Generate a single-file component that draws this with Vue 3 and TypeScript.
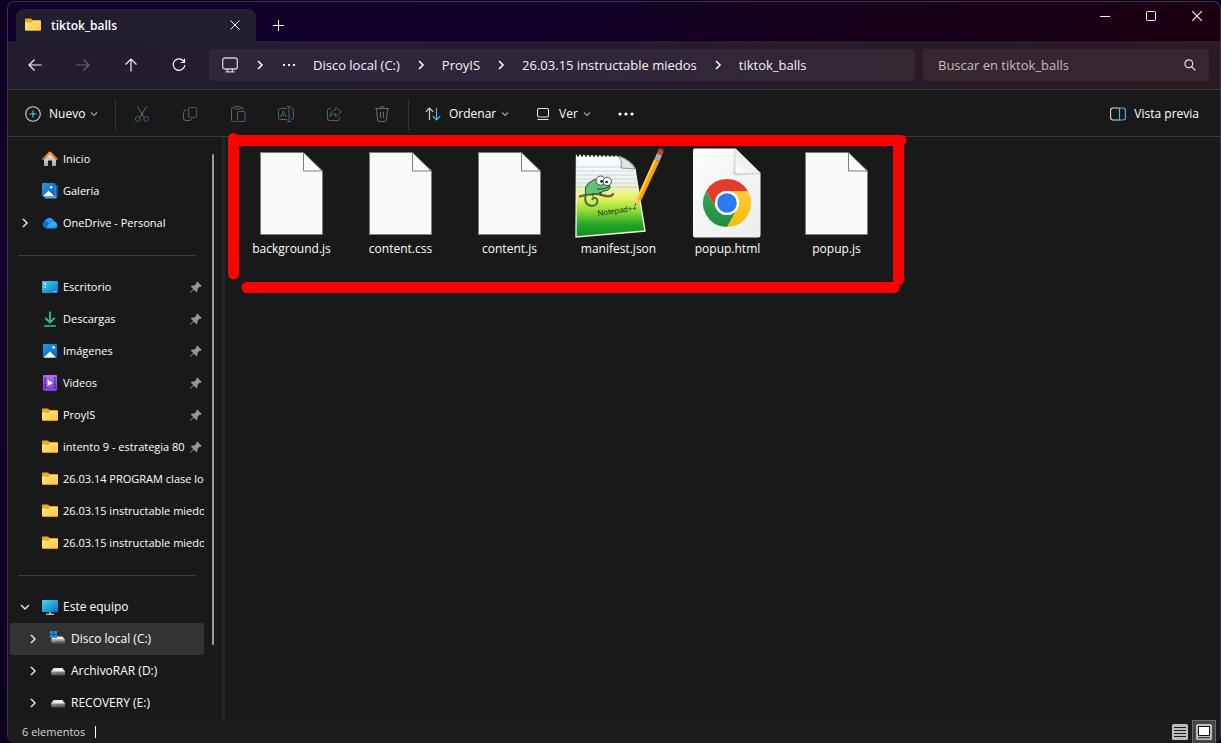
<script setup lang="ts">
import { ref } from 'vue'

interface Place {
  label: string
  icon: string
  arrow?: 'right' | 'down'
  pinned?: boolean
  child?: boolean
  selected?: boolean
}

interface Group {
  id: string
  compact: boolean
  places: Place[]
}

interface FileItem {
  name: string
  icon: string
}

const groups: Group[] = [
  {
    id: 'quick',
    compact: true,
    places: [
      { label: 'Inicio', icon: 'home' },
      { label: 'Galería', icon: 'gallery' },
      { label: 'OneDrive - Personal', icon: 'cloud', arrow: 'right' },
    ],
  },
  {
    id: 'pinned',
    compact: true,
    places: [
      { label: 'Escritorio', icon: 'desktop', pinned: true },
      { label: 'Descargas', icon: 'download', pinned: true },
      { label: 'Imágenes', icon: 'picture', pinned: true },
      { label: 'Videos', icon: 'video', pinned: true },
      { label: 'ProyIS', icon: 'folder', pinned: true },
      { label: 'intento 9 - estrategia 80', icon: 'folder', pinned: true },
      { label: '26.03.14 PROGRAM clase lo', icon: 'folder' },
      { label: '26.03.15 instructable miedo', icon: 'folder' },
      { label: '26.03.15 instructable miedo', icon: 'folder' },
    ],
  },
  {
    id: 'drives',
    compact: false,
    places: [
      { label: 'Este equipo', icon: 'computer', arrow: 'down' },
      { label: 'Disco local (C:)', icon: 'drive-system', arrow: 'right', child: true, selected: true },
      { label: 'ArchivoRAR (D:)', icon: 'drive', arrow: 'right', child: true },
      { label: 'RECOVERY (E:)', icon: 'drive', arrow: 'right', child: true },
    ],
  },
]

const crumbs: string[] = ['Disco local (C:)', 'ProyIS', '26.03.15 instructable miedos', 'tiktok_balls']

const actions = [
  { id: 'cut', label: 'Cortar' },
  { id: 'copy', label: 'Copiar' },
  { id: 'paste', label: 'Pegar' },
  { id: 'rename', label: 'Cambiar nombre' },
  { id: 'share', label: 'Compartir' },
  { id: 'trash', label: 'Eliminar' },
]

const files: FileItem[] = [
  { name: 'background.js', icon: 'page' },
  { name: 'content.css', icon: 'page' },
  { name: 'content.js', icon: 'page' },
  { name: 'manifest.json', icon: 'notepad' },
  { name: 'popup.html', icon: 'chrome' },
  { name: 'popup.js', icon: 'page' },
]

const query = ref('')
</script>

<template>
  <div class="desktop">
    <svg class="symbols" width="0" height="0" aria-hidden="true">
      <defs>
        <linearGradient id="g-folder" x1="0" y1="0" x2="1" y2="1">
          <stop offset="0" stop-color="#ffe9a0" /><stop offset="1" stop-color="#fec52f" />
        </linearGradient>
        <linearGradient id="g-blue" x1="0" y1="0" x2="1" y2="1">
          <stop offset="0" stop-color="#1f9be6" /><stop offset="1" stop-color="#0a62b8" />
        </linearGradient>
        <linearGradient id="g-cyan" x1="0" y1="0" x2="1" y2="1">
          <stop offset="0" stop-color="#3fdde6" /><stop offset="1" stop-color="#0f6cc8" />
        </linearGradient>
        <linearGradient id="g-purple" x1="0" y1="0" x2="0" y2="1">
          <stop offset="0" stop-color="#b36df0" /><stop offset="1" stop-color="#7f3fd6" />
        </linearGradient>
        <linearGradient id="g-home" x1="0" y1="0" x2="0" y2="1">
          <stop offset="0" stop-color="#e8e8e8" /><stop offset="1" stop-color="#a8a8a8" />
        </linearGradient>
        <linearGradient id="g-roof" x1="0" y1="0" x2="0" y2="1">
          <stop offset="0" stop-color="#ff9a3c" /><stop offset="1" stop-color="#dd5a00" />
        </linearGradient>
        <linearGradient id="g-drive" x1="0" y1="0" x2="0" y2="1">
          <stop offset="0" stop-color="#8c8c8c" /><stop offset="1" stop-color="#4c4c4c" />
        </linearGradient>
        <linearGradient id="g-note" x1="0" y1="0" x2="0" y2="1">
          <stop offset="0" stop-color="#fbfcff" /><stop offset="0.32" stop-color="#eef4ee" />
          <stop offset="0.52" stop-color="#e9f25e" /><stop offset="0.68" stop-color="#8fdc34" />
          <stop offset="0.85" stop-color="#22a524" /><stop offset="1" stop-color="#0f8c1c" />
        </linearGradient>
        <linearGradient id="g-sheet" x1="0" y1="0" x2="1" y2="1">
          <stop offset="0" stop-color="#fdfdfd" /><stop offset="1" stop-color="#ededed" />
        </linearGradient>
        <linearGradient id="g-fold" x1="0" y1="1" x2="1" y2="0">
          <stop offset="0" stop-color="#ffffff" /><stop offset="1" stop-color="#dcdcdc" />
        </linearGradient>
        <linearGradient id="g-cg" x1="0" y1="0" x2="0" y2="1">
          <stop offset="0" stop-color="#34a853" /><stop offset="1" stop-color="#1e8e3e" />
        </linearGradient>
        <linearGradient id="g-cy" x1="0" y1="0" x2="0" y2="1">
          <stop offset="0" stop-color="#fdcb3c" /><stop offset="1" stop-color="#fbbc04" />
        </linearGradient>

        <symbol id="i-folder" viewBox="0 0 16 16">
          <path d="M0 2.4Q0 1.4 1 1.4H5.6Q6.2 1.4 6.6 1.9L7.6 2.9H15Q16 2.9 16 3.9V8H0Z" fill="#f3a712" />
          <path d="M0 5.6H5.6Q6.3 5.6 6.8 5.1L7.6 4.4Q8 4 8.6 4H15Q16 4 16 5V12.6Q16 14 14.6 14H1.4Q0 14 0 12.6Z" fill="url(#g-folder)" />
          <path d="M0.6 13.5H15.4" stroke="#e09a12" stroke-width="1" />
        </symbol>
        <symbol id="i-home" viewBox="0 0 16 16">
          <path d="M2 7.4L8 2L14 7.4V14Q14 15 13 15H10V9.6H6V15H3Q2 15 2 14Z" fill="url(#g-home)" />
          <path d="M1.2 8L8 1.6L14.8 8" fill="none" stroke="url(#g-roof)" stroke-width="2.2" stroke-linejoin="round" stroke-linecap="round" />
        </symbol>
        <symbol id="i-gallery" viewBox="0 0 16 16">
          <path d="M4 2.4H15.4V13.8Q15.4 15.6 13.8 15.6H2.6V13Z" fill="#5c9bd8" />
          <path d="M14 2.4H15.4V13.8L14 15Z" fill="#0f5da6" />
          <rect x="0" y="0" width="13.4" height="13.4" rx="1" fill="url(#g-blue)" />
          <path d="M1 13.2L6.6 7.4L12.4 13.2Z" fill="#fff" />
          <circle cx="9.2" cy="4.2" r="1.2" fill="#fff" />
        </symbol>
        <symbol id="i-cloud" viewBox="0 0 16 16">
          <path d="M4 13.2A4 4 0 0 1 2.6 5.8A5.2 5.2 0 0 1 11.6 5L9 9.6L6 13.2Z" fill="#0f6ad8" />
          <path d="M5 13.2Q5.4 9.4 8.8 7.2Q11.4 5.2 12.6 6.4A3.6 3.6 0 0 1 12.6 13.2Z" fill="#30b4fa" />
          <path d="M3.4 6Q6 2 9.4 3.4Q11.2 4.2 11.8 5.6Q8.8 5.6 6.8 8.2Q5.8 6.2 3.4 6Z" fill="#2f9df4" />
          <path d="M4 13.2Q6.4 11 10 10.8Q13.4 10.6 15.8 11A3.3 3.3 0 0 1 12.6 13.2Z" fill="#1f9df8" />
        </symbol>
        <symbol id="i-desktop" viewBox="0 0 16 16">
          <rect x="0" y="2" width="16" height="12" rx="1" fill="url(#g-cyan)" />
          <path d="M2.4 4.2H4V5.8H2.4ZM2.4 7.2H4V8.8H2.4Z" fill="#fff" />
          <path d="M11 12.6H12.2M13.2 12.6H14.4" stroke="#bfe6ff" />
        </symbol>
        <symbol id="i-download" viewBox="0 0 16 16">
          <path d="M8 0.4V11M3.2 6.8L8 11.4L12.8 6.8" fill="none" stroke="#2cc397" stroke-width="1.8" />
          <path d="M2 15H14" stroke="#1fae8e" stroke-width="1.8" />
        </symbol>
        <symbol id="i-picture" viewBox="0 0 16 16">
          <rect x="1" y="1" width="14" height="14" rx="1" fill="url(#g-blue)" />
          <path d="M2 14.4L8 8.4L14 14.4Z" fill="#fff" />
          <circle cx="11.6" cy="4.4" r="1.3" fill="#fff" />
        </symbol>
        <symbol id="i-video" viewBox="0 0 16 16">
          <rect x="1" y="0" width="14" height="16" rx="1" fill="url(#g-purple)" />
          <path d="M5.6 5L11 8L5.6 11Z" fill="#fff" />
          <path d="M2.4 3.4H4M2.4 6.4H4M2.4 9.4H4M2.4 12.4H4M12 3.4H13.6M12 6.4H13.6M12 9.4H13.6M12 12.4H13.6" stroke="#3d1478" stroke-width="1.6" />
        </symbol>
        <symbol id="i-computer" viewBox="0 0 16 16">
          <rect x="0" y="1" width="16" height="12" rx="0.6" fill="url(#g-cyan)" />
          <path d="M7 13H9V15H7Z" fill="#9c9c9c" />
          <path d="M4 15.3H12" stroke="#cfcfcf" stroke-width="1.2" />
        </symbol>
        <symbol id="i-drive" viewBox="0 0 16 16">
          <path d="M3.6 5H12.4L15 8.4H1Z" fill="#ececec" />
          <rect x="1" y="8" width="14" height="4.4" rx="0.8" fill="url(#g-drive)" />
          <path d="M1 8.6H15" stroke="#c9c9c9" stroke-width="0.8" />
          <circle cx="4.4" cy="10.4" r="0.8" fill="#3bea3b" />
        </symbol>
        <symbol id="i-drive-system" viewBox="0 0 16 16">
          <path d="M3.6 5.4H12.4L15 8.8H1Z" fill="#ececec" />
          <rect x="1" y="8.4" width="14" height="4.2" rx="0.8" fill="url(#g-drive)" />
          <path d="M1 9H15" stroke="#c9c9c9" stroke-width="0.8" />
          <circle cx="4.4" cy="10.8" r="0.8" fill="#3bea3b" />
          <path d="M0 0H3.2V3.2H0ZM3.9 0H7.1V3.2H3.9ZM0 3.9H3.2V7.1H0ZM3.9 3.9H7.1V7.1H3.9Z" fill="#1a8fe3" />
        </symbol>
        <symbol id="i-pin" viewBox="0 0 16 16">
          <path d="M9.2 2.4L13.6 6.8L12.6 8L11.6 7.8L9.8 9.6L9.4 12.2L8.4 13.2L5.8 10.6L2.8 13.6L2.2 13.6V13L5.2 10L2.8 7.6L3.8 6.6L6.4 6.4L8.4 4.4L8.2 3.4Z" fill="#8f979e" />
        </symbol>
        <symbol id="i-right" viewBox="0 0 16 16">
          <path d="M6 4L10 8L6 12" fill="none" stroke="currentColor" stroke-width="1.5" />
        </symbol>
        <symbol id="i-down" viewBox="0 0 16 16">
          <path d="M4 6L8 10L12 6" fill="none" stroke="currentColor" stroke-width="1.5" />
        </symbol>

        <symbol id="i-cut" viewBox="0 0 16 16">
          <path d="M3.4 0.6L10.2 11.4M12.6 0.6L5.8 11.4" fill="none" stroke="#6a6a6a" />
          <circle cx="3.8" cy="13" r="2.4" fill="none" stroke="#2f6688" />
          <circle cx="12.2" cy="13" r="2.4" fill="none" stroke="#2f6688" />
        </symbol>
        <symbol id="i-copy" viewBox="0 0 16 16">
          <path d="M4.5 4.2Q1.5 4.2 1.5 6.4V12.5Q1.5 14.5 4 14.5H7.5Q9.4 14.5 9.8 13" fill="none" stroke="#626262" />
          <rect x="6.5" y="1.5" width="8" height="10" rx="1.6" fill="none" stroke="#2f6688" />
        </symbol>
        <symbol id="i-paste" viewBox="0 0 16 16">
          <path d="M4.4 1.8H2.5Q1.5 1.8 1.5 2.8V14.5Q1.5 15.5 2.5 15.5H6M11 1.8H12Q13 1.8 13 2.8V4" fill="none" stroke="#626262" />
          <rect x="4.5" y="0.5" width="6" height="2.4" rx="1" fill="none" stroke="#626262" />
          <rect x="7.5" y="5.5" width="7.5" height="10" rx="1" fill="none" stroke="#2f6688" />
        </symbol>
        <symbol id="i-rename" viewBox="0 0 16 16">
          <path d="M9 2.5H2.5Q0.5 2.5 0.5 4.5V11.5Q0.5 13.5 2.5 13.5H9M13 2.5H13.6Q15.5 2.5 15.5 4.5V11.5Q15.5 13.5 13.6 13.5H13" fill="none" stroke="#626262" />
          <path d="M11 0.5V15.5M9 0.5H13M9 15.5H13" stroke="#2f6688" />
          <path d="M2.8 11L5.4 4.6L8 11M3.8 9H7" fill="none" stroke="#2f6688" />
        </symbol>
        <symbol id="i-share" viewBox="0 0 16 16">
          <path d="M5 2.5H3.4Q1.5 2.5 1.5 4.4V12.6Q1.5 14.5 3.4 14.5H11.6Q13.5 14.5 13.5 12.6V11" fill="none" stroke="#626262" />
          <path d="M9.6 1.2L15.4 6L9.6 10.6V7.8Q6 7.6 3.8 10.6Q4.4 4.4 9.6 4Z" fill="none" stroke="#2f6688" stroke-linejoin="round" />
        </symbol>
        <symbol id="i-trash" viewBox="0 0 16 16">
          <path d="M0.8 2.5H15.2M6 2.5Q6 0.5 8 0.5T10 2.5M2.4 2.8L3.6 14Q3.8 15.5 5.2 15.5H10.8Q12.2 15.5 12.4 14L13.6 2.8M6.5 6V12M9.5 6V12" fill="none" stroke="#6c6c6c" />
        </symbol>

        <symbol id="f-page" viewBox="0 0 91 96">
          <path d="M14.5 7.5H57.5L76.5 26V89.5H14.5Z" fill="#fafafa" stroke="#7c7c78" />
          <path d="M57.5 7.5V26H76.5" fill="none" stroke="#7c7c78" />
        </symbol>
        <symbol id="f-chrome" viewBox="0 0 91 96">
          <path d="M13 3.5H53.5L78.5 28V90Q78.5 92.5 76 92.5H13Q11 92.5 11 90V5.5Q11 3.5 13 3.5Z" fill="url(#g-sheet)" />
          <path d="M52.5 4L51 28Q52 31 56 30.5L78 29V28L53.5 3.5Z" fill="#c4c4c4" opacity="0.6" />
          <path d="M53.5 3.5V25.5Q53.5 28 56 28H78.5Z" fill="url(#g-fold)" />
          <path d="M24.2 46A24 24 0 0 1 65.8 46H45A12 12 0 0 0 34.6 64Z" fill="#e33b2e" />
          <path d="M24.2 46L34.6 64A12 12 0 0 0 55.4 64L45 82A24 24 0 0 1 24.2 46Z" fill="url(#g-cg)" />
          <path d="M65.8 46H45A12 12 0 0 1 55.4 64L45 82A24 24 0 0 0 65.8 46Z" fill="url(#g-cy)" />
          <circle cx="45" cy="58" r="12" fill="#fff" />
          <circle cx="45" cy="58" r="9.8" fill="#2a7bf0" />
        </symbol>
        <symbol id="f-notepad" viewBox="0 0 91 96">
          <path d="M3.5 10.5L46 11.5Q58 16 62 24L72 86L3 92Z" fill="url(#g-note)" stroke="#e9f0ea" stroke-width="1.4" />
          <path d="M4 22H58M4 26H61M4 30H62M4 34H63M4 38H63M4 42H64" stroke="#a9c4de" stroke-width="0.6" />
          <path d="M4 10.4H46" stroke="#1d1d1d" stroke-width="2.4" stroke-dasharray="2 2" />
          <path d="M46 11.5Q50 17 48 23L62 24Q57 15 46 11.5Z" fill="#e2e4e6" stroke="#77797b" stroke-width="0.8" />
          <path d="M7 51.4Q20 47 29 50T40 49" fill="none" stroke="#7d5a44" stroke-width="2.4" stroke-linecap="round" />
          <path d="M13 50Q10 40 19 36Q24 32 30 37L37 41Q38 45 31 46Q26 50 19 49Q15 50 13 50Z" fill="#63c27a" stroke="#1d4d2c" stroke-width="1" />
          <path d="M13 49Q10 60 19 61Q26 60 24 54Q21 51 19 55" fill="none" stroke="#347a45" stroke-width="2" />
          <path d="M24 44Q30 45 36 42M20 48V52M27 47L28 51" fill="none" stroke="#1d4d2c" />
          <circle cx="27.6" cy="35.6" r="4.6" fill="#fff" stroke="#222" stroke-width="0.8" />
          <circle cx="34.2" cy="36.4" r="4.2" fill="#fff" stroke="#222" stroke-width="0.8" />
          <circle cx="28.6" cy="36.4" r="1.3" fill="#111" />
          <circle cx="33.6" cy="37" r="1.3" fill="#111" />
          <text x="25" y="71" transform="rotate(-8 25 71)" font-family="Liberation Sans, sans-serif" font-size="8" fill="#20301c">Notepad++</text>
          <path d="M61.6 61L63.2 54L81.4 14L86.4 16.4L68 56Z" fill="#f5a40c" />
          <path d="M63.2 54L81.4 14L83 14.8L65 55Z" fill="#ffcf4a" />
          <path d="M61.6 61L63.2 54L68 56Z" fill="#e8c9a0" />
          <path d="M61.6 61L62.1 58.6L63.4 59.2Z" fill="#222" />
          <path d="M81.4 14L84 8L89 10.4L86.4 16.4Z" fill="#a9adb2" />
          <path d="M84 8L85.4 4.6Q87 2.6 89.4 4Q91 5.4 90.4 7.2L89 10.4Z" fill="#c0453c" />
        </symbol>
      </defs>
    </svg>

    <div class="window">
      <header class="titlebar">
        <div class="tab">
          <svg class="ico" aria-hidden="true"><use href="#i-folder" /></svg>
          <span class="tab-title">tiktok_balls</span>
          <button class="plain tab-close" aria-label="Cerrar pestaña">
            <svg width="10" height="10" viewBox="0 0 10 10"><path d="M0.5 0.5L9.5 9.5M9.5 0.5L0.5 9.5" stroke="#fff" /></svg>
          </button>
        </div>
        <button class="plain tab-new" aria-label="Nueva pestaña">
          <svg width="11" height="11" viewBox="0 0 11 11"><path d="M5.5 0V11M0 5.5H11" stroke="#fff" /></svg>
        </button>
        <div class="controls">
          <button class="plain control" aria-label="Minimizar">
            <svg width="10" height="10" viewBox="0 0 10 10"><path d="M0 5.5H10" stroke="#fff" /></svg>
          </button>
          <button class="plain control" aria-label="Maximizar">
            <svg width="10" height="10" viewBox="0 0 10 10"><rect x="0.5" y="0.5" width="9" height="9" rx="1" fill="none" stroke="#fff" /></svg>
          </button>
          <button class="plain control" aria-label="Cerrar">
            <svg width="10" height="10" viewBox="0 0 10 10"><path d="M0.2 0.2L9.8 9.8M9.8 0.2L0.2 9.8" stroke="#fff" stroke-width="1.1" /></svg>
          </button>
        </div>
      </header>

      <div class="navbar">
        <button class="plain nav-btn" aria-label="Atrás">
          <svg width="14" height="14" viewBox="0 0 14 14"><path d="M13.5 7H1.5M6.5 1.5L1 7L6.5 12.5" fill="none" stroke="#f4f2f6" stroke-width="1.2" /></svg>
        </button>
        <button class="plain nav-btn" aria-label="Adelante" disabled>
          <svg width="14" height="14" viewBox="0 0 14 14"><path d="M0.5 7H12.5M7.5 1.5L13 7L7.5 12.5" fill="none" stroke="#6b6374" stroke-width="1.2" /></svg>
        </button>
        <button class="plain nav-btn" aria-label="Arriba">
          <svg width="14" height="14" viewBox="0 0 14 14"><path d="M7 13.5V1.5M1.5 6.5L7 1L12.5 6.5" fill="none" stroke="#f4f2f6" stroke-width="1.2" /></svg>
        </button>
        <button class="plain nav-btn" aria-label="Actualizar">
          <svg width="14" height="14" viewBox="0 0 14 14"><path d="M12.2 4A5.8 5.8 0 1 0 12.8 7M12.5 0.8V4.5H8.8" fill="none" stroke="#f4f2f6" stroke-width="1.2" /></svg>
        </button>
        <nav class="address" aria-label="Ruta">
          <button class="plain crumb-pc" aria-label="Este equipo">
            <svg width="16" height="16" viewBox="0 0 16 16">
              <rect x="0.7" y="1" width="14.6" height="11" rx="2" fill="none" stroke="#cfcad6" stroke-width="1.3" />
              <path d="M5.5 12V14.5M10.5 12V14.5M3.5 14.8H12.5" stroke="#cfcad6" stroke-width="1.2" />
            </svg>
          </button>
          <svg class="ico crumb-arrow" aria-hidden="true"><use href="#i-right" /></svg>
          <button class="plain crumb-more" aria-label="Más ubicaciones">
            <svg width="12" height="2" viewBox="0 0 12 2"><path d="M0 0H2V2H0ZM5 0H7V2H5ZM10 0H12V2H10Z" fill="#f1eef4" /></svg>
          </button>
          <template v-for="(crumb, i) in crumbs" :key="crumb">
            <svg v-if="i > 0" class="ico crumb-sep" aria-hidden="true"><use href="#i-right" /></svg>
            <a class="crumb" href="#">{{ crumb }}</a>
          </template>
        </nav>
        <label class="search">
          <input v-model="query" type="text" placeholder="Buscar en tiktok_balls" aria-label="Buscar en tiktok_balls" />
          <svg width="12" height="12" viewBox="0 0 12 12" aria-hidden="true"><circle cx="4.8" cy="4.8" r="3.9" fill="none" stroke="#e6e1e6" stroke-width="1.2" /><path d="M7.6 7.6L11.4 11.4" stroke="#e6e1e6" stroke-width="1.3" /></svg>
        </label>
      </div>

      <div class="toolbar">
        <button class="plain tool tool-new">
          <svg width="16" height="16" viewBox="0 0 16 16"><circle cx="8" cy="8" r="7.3" fill="none" stroke="#d2d2d2" stroke-width="1.1" /><path d="M8 4.5V11.5M4.5 8H11.5" stroke="#53bdf5" stroke-width="1.2" /></svg>
          <span class="tool-label">Nuevo</span>
          <svg width="8" height="8" viewBox="0 0 8 8"><path d="M1 2.5L4 5.5L7 2.5" fill="none" stroke="#a0a0a0" stroke-width="1.2" /></svg>
        </button>
        <span class="divider"></span>
        <button v-for="action in actions" :key="action.id" class="plain action" :aria-label="action.label" disabled>
          <svg class="ico" aria-hidden="true"><use :href="`#i-${action.id}`" /></svg>
        </button>
        <span class="divider"></span>
        <button class="plain tool tool-sort">
          <svg width="16" height="14" viewBox="0 0 16 14"><path d="M4.5 13V1M0.8 4.8L4.5 1L8.2 4.8" fill="none" stroke="#d2d2d2" stroke-width="1.2" /><path d="M11.5 1V13M7.8 9.2L11.5 13L15.2 9.2" fill="none" stroke="#4db8f2" stroke-width="1.2" /></svg>
          <span class="tool-label">Ordenar</span>
          <svg width="8" height="8" viewBox="0 0 8 8"><path d="M1 2.5L4 5.5L7 2.5" fill="none" stroke="#a0a0a0" stroke-width="1.2" /></svg>
        </button>
        <button class="plain tool tool-view">
          <svg width="16" height="14" viewBox="0 0 16 14"><rect x="2.5" y="1.5" width="11" height="8.5" rx="1.4" fill="none" stroke="#e4e4e4" stroke-width="1.1" /><path d="M2.5 12.5H13.5" stroke="#e4e4e4" stroke-width="1.1" /></svg>
          <span class="tool-label">Ver</span>
          <svg width="8" height="8" viewBox="0 0 8 8"><path d="M1 2.5L4 5.5L7 2.5" fill="none" stroke="#a0a0a0" stroke-width="1.2" /></svg>
        </button>
        <button class="plain action" aria-label="Ver más">
          <svg width="16" height="4" viewBox="0 0 16 4"><circle cx="2" cy="2" r="1.6" fill="#fff" /><circle cx="8" cy="2" r="1.6" fill="#fff" /><circle cx="14" cy="2" r="1.6" fill="#fff" /></svg>
        </button>
        <button class="plain tool tool-preview">
          <svg width="16" height="14" viewBox="0 0 16 14"><path d="M9.5 1H2.8Q0.6 1 0.6 3.2V10.8Q0.6 13 2.8 13H9.5" fill="none" stroke="#d8d8d8" stroke-width="1.1" /><path d="M9.5 1H13.2Q15.4 1 15.4 3.2V10.8Q15.4 13 13.2 13H9.5Z" fill="none" stroke="#4db8f2" stroke-width="1.1" /></svg>
          <span class="tool-label">Vista previa</span>
        </button>
      </div>

      <div class="body">
        <aside class="sidebar">
          <div class="tree">
            <ul v-for="group in groups" :key="group.id" class="group" :class="{ compact: group.compact }">
              <li v-for="(place, i) in group.places" :key="i" class="row" :class="{ child: place.child, selected: place.selected }">
                <span class="toggle">
                  <svg v-if="place.arrow" class="ico" aria-hidden="true"><use :href="`#i-${place.arrow}`" /></svg>
                </span>
                <svg class="ico place-icon" aria-hidden="true"><use :href="`#i-${place.icon}`" /></svg>
                <span class="place-label">{{ place.label }}</span>
                <svg v-if="place.pinned" class="ico" aria-hidden="true"><use href="#i-pin" /></svg>
              </li>
            </ul>
          </div>
          <div class="scroll"></div>
        </aside>

        <main class="content">
          <ul class="files">
            <li v-for="file in files" :key="file.name" class="file">
              <svg class="file-icon" aria-hidden="true"><use :href="`#f-${file.icon}`" /></svg>
              <span>{{ file.name }}</span>
            </li>
          </ul>
          <svg class="marker" width="690" height="170" viewBox="0 0 690 170" aria-hidden="true">
            <g fill="none" stroke="#fe0000" stroke-width="11" stroke-linecap="round" stroke-linejoin="round">
              <path d="M8.5 12.5V148" />
              <path d="M8.5 14.5H676" />
              <path d="M673.5 15V154" />
              <path d="M669 161.5H22" />
            </g>
          </svg>
        </main>
      </div>

      <footer class="status">
        <span>6 elementos</span>
        <span class="status-bar"></span>
        <div class="views">
          <button class="plain view" aria-label="Detalles">
            <svg width="16" height="16" viewBox="0 0 16 16"><rect width="16" height="16" rx="1.5" fill="#bdbdbd" /><path d="M2 3.5H14M2 6.5H14M2 9.5H14M2 12.5H14" stroke="#1b1b1b" /></svg>
          </button>
          <button class="plain view active" aria-label="Iconos grandes">
            <svg width="16" height="16" viewBox="0 0 16 16"><rect width="16" height="16" rx="1.5" fill="#bdbdbd" /><rect x="2.5" y="2.5" width="11" height="9" fill="#fff" stroke="#111" /><path d="M2 13.8H14" stroke="#111" /></svg>
          </button>
        </div>
      </footer>
    </div>
  </div>
</template>

<style>
body {
  margin: 0;
  background: #0d0020;
}
</style>

<style scoped>
* {
  box-sizing: border-box;
}

.desktop {
  height: 100vh;
  padding: 1px 0 0 7px;
  overflow: hidden;
  background: linear-gradient(#0c0020, #12002c 35%, #0c001e);
  color: #fff;
  font-family: 'Open Sans', 'Noto Sans', sans-serif;
  font-size: 12px;
  line-height: 16px;
}

.symbols {
  position: absolute;
}

.ico {
  width: 16px;
  height: 16px;
  flex: none;
}

.plain {
  display: flex;
  align-items: center;
  justify-content: center;
  padding: 0;
  border: 0;
  background: none;
  color: inherit;
  font: inherit;
}

.window {
  display: flex;
  flex-direction: column;
  height: 100%;
  border: 1px solid #3b3842;
  border-bottom: 0;
  border-radius: 8px;
  overflow: hidden;
  background: #191919;
}

.titlebar {
  display: flex;
  height: 39px;
  flex: none;
  padding: 7px 0 0 8px;
  background: linear-gradient(100deg, #10002b, #12002a 45%, #17001d 65%, #1c0011);
}

.tab {
  display: flex;
  align-items: center;
  width: 240px;
  padding: 0 13px 0 9px;
  border-radius: 8px 8px 0 0;
  background: #231d30;
}

.tab-title {
  flex: 1;
  margin-left: 10px;
  padding-top: 2px;
  font-weight: 600;
}

.tab-close {
  width: 16px;
  height: 24px;
}

.tab-new {
  width: 44px;
}

.controls {
  display: flex;
  height: 32px;
  margin: -7px 0 0 auto;
}

.control {
  width: 46px;
  height: 28px;
}

.navbar {
  display: flex;
  align-items: center;
  height: 49px;
  flex: none;
  padding: 0 11px 0 3px;
  border-bottom: 1px solid #3c3a3e;
  background: linear-gradient(95deg, #231c31, #251b30 50%, #2a1a27 80%, #2c1a24);
}

.nav-btn {
  width: 48px;
  height: 32px;
  flex: none;
}

.address {
  display: flex;
  align-items: center;
  flex: 1;
  height: 32px;
  min-width: 0;
  margin: 0 8px 0 6px;
  border-radius: 4px;
  background: linear-gradient(90deg, #2f263c, #30263b 50%, #342732);
  font-size: 13px;
  overflow: hidden;
}

.crumb-pc {
  width: 42px;
  height: 32px;
}

.crumb-arrow {
  margin: 0 1px;
}

.crumb-more {
  width: 40px;
  height: 32px;
  margin-right: 4px;
}

.crumb {
  color: #f5f3f7;
  text-decoration: none;
  white-space: nowrap;
}

.crumb-sep {
  margin: 0 13px;
}

.search {
  display: flex;
  align-items: center;
  flex: 0 1 286px;
  height: 32px;
  padding: 0 13px 0 15px;
  border-radius: 4px;
  background: #35262f;
}

.search input {
  flex: 1;
  min-width: 0;
  padding: 0;
  border: 0;
  outline: 0;
  background: none;
  color: #fff;
  font: inherit;
  font-size: 13px;
}

.search input::placeholder {
  color: #c3bcc2;
  opacity: 1;
}

.toolbar {
  display: flex;
  align-items: center;
  height: 47px;
  flex: none;
  padding-top: 2px;
  border-bottom: 1px solid #3a3a3a;
  background: #191919;
}

.tool {
  justify-content: flex-start;
  height: 32px;
  white-space: nowrap;
}

.tool-label {
  margin: 0 5px 0 8px;
}

.tool-new {
  width: 105px;
  padding-left: 17px;
}

.tool-sort {
  width: 109px;
  padding-left: 14px;
}

.tool-view {
  width: 82px;
  padding-left: 15px;
}

.tool-preview {
  margin-left: auto;
  padding-right: 16px;
}

.action {
  width: 48px;
  height: 32px;
}

.divider {
  width: 1px;
  height: 31px;
  margin: 0 2px;
  background: #333;
}

.body {
  display: flex;
  flex: 1;
  min-height: 0;
}

.sidebar {
  display: flex;
  width: 217px;
  flex: none;
  border-right: 3px solid #242424;
}

.tree {
  width: 196px;
  padding: 6px 0 0 2px;
  overflow: hidden;
}

.group {
  margin: 0;
  padding: 0;
  list-style: none;
}

.compact {
  font-size: 11px;
}

.group + .group {
  margin-top: 16px;
}

.group + .group::before {
  content: '';
  display: block;
  height: 1px;
  margin: 0 8px 15px;
  background: #3d3d3d;
}

.row {
  display: flex;
  align-items: center;
  height: 32px;
}

.child {
  padding-left: 8px;
}

.selected {
  border-radius: 2px;
  background: #333;
}

.toggle {
  display: flex;
  justify-content: center;
  width: 30px;
  flex: none;
  color: #e2e2e2;
}

.place-icon {
  margin: 0 5px 0 2px;
}

.place-label {
  flex: 1;
  min-width: 0;
  overflow: hidden;
  white-space: nowrap;
}

.scroll {
  width: 2px;
  height: 491px;
  max-height: 85%;
  margin: 17px 0 0 8px;
  border-radius: 1px;
  background: #9a9a9a;
}

.content {
  position: relative;
  flex: 1;
  min-width: 0;
  padding: 8px 12px;
}

.files {
  display: grid;
  grid-template-columns: repeat(auto-fill, 109px);
  margin: 0;
  padding: 0;
  list-style: none;
}

.file {
  display: flex;
  flex-direction: column;
  align-items: center;
}

.file-icon {
  width: 91px;
  height: 96px;
}

.marker {
  position: absolute;
  top: -11px;
  left: 0;
}

.status {
  display: flex;
  align-items: center;
  height: 23px;
  flex: none;
  padding: 0 4px 0 14px;
  background: #1c1c1c;
  color: #d8d8d8;
  font-size: 11px;
}

.status-bar {
  width: 1px;
  height: 12px;
  margin-left: 10px;
  background: #fff;
}

.views {
  display: flex;
  margin-left: auto;
}

.view {
  width: 24px;
  height: 23px;
}

.active {
  border: 1px solid #6a6a6a;
  border-bottom: 0;
  background: #444;
}
</style>
